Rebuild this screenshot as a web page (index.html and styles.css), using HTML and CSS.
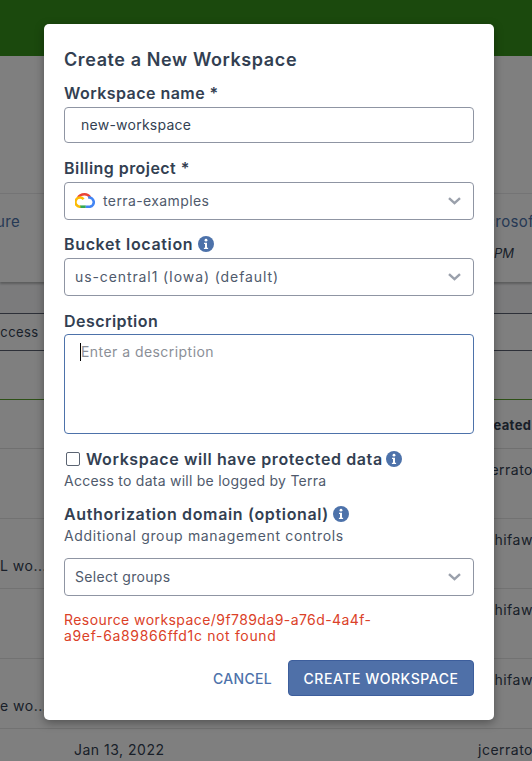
FILE: index.html
```html
<!DOCTYPE html>
<html lang="en">
<head>
<meta charset="utf-8">
<title>Create a New Workspace</title>
<link rel="stylesheet" href="styles.css">
</head>
<body>
<div class="page">
  <header class="topbar"></header>
  <section class="intro"></section>
  <section class="cards">
    <span class="card-link">ure</span>
    <span class="card-link">Microsoft</span>
  </section>
  <section class="card-meta"><span></span><span class="meta-time">PM</span></section>
  <section class="tabs"></section>
  <section class="filter"><span>Access</span></section>
  <section class="gap"></section>
  <section class="thead"><span></span><span class="head-cell">Created</span></section>
  <div class="row"><span class="name"></span><span class="date"></span><span class="owner">jcerrato</span></div>
  <div class="row"><span class="name">L wo...</span><span class="date"></span><span class="owner">schifaw</span></div>
  <div class="row"><span class="name"></span><span class="date"></span><span class="owner">schifaw</span></div>
  <div class="row"><span class="name">e wo...</span><span class="date"></span><span class="owner">schifaw</span></div>
  <div class="row"><span class="name"></span><span class="date top">Jan 13, 2022</span><span class="owner">jcerrato</span></div>
</div>
<div class="overlay"></div>
<form class="modal">
  <h1 class="title">Create a New Workspace</h1>
  <label class="label l-name" for="wsname">Workspace name *</label>
  <input id="wsname" class="input" type="text" value="new-workspace">
  <div class="label l-billing">Billing project *</div>
  <div class="select">
    <svg class="gcp" viewBox="0 0 20 15" aria-hidden="true">
      <path class="s-red" d="M2.9 5.2C3.9 3 6.5 1.3 9.6 1.3c2.2 0 4.2 1 5.4 2.9"/>
      <path class="s-blue" d="M13.2 4.6A4.6 4.6 0 0 1 15 13.7H10.4"/>
      <path class="s-green" d="M10.6 13.7H5"/>
      <path class="s-yellow" d="M5.4 13.7A4.6 4.6 0 1 1 8.6 6.2"/>
    </svg>
    <span class="value v-terra">terra-examples</span>
    <svg class="chev" viewBox="0 0 13 8" aria-hidden="true"><path d="M1 1.2 6.5 6.2 12 1.2"/></svg>
  </div>
  <div class="label l-bucket">Bucket location
    <svg class="info" viewBox="0 0 16 16" aria-hidden="true"><circle cx="8" cy="8" r="8"/><circle class="i" cx="8" cy="4.2" r="1.4"/><path class="i" d="M6 6.7h3v5h1.1v1.4H5.9v-1.4H7V8.1H6z"/></svg>
  </div>
  <div class="select">
    <span class="value v-bucket">us-central1 (Iowa) (default)</span>
    <svg class="chev" viewBox="0 0 13 8" aria-hidden="true"><path d="M1 1.2 6.5 6.2 12 1.2"/></svg>
  </div>
  <label class="label l-desc" for="desc">Description</label>
  <div class="area-wrap">
    <textarea id="desc" class="area" placeholder="Enter a description"></textarea>
    <span class="caret"></span>
  </div>
  <div class="check-row">
    <input class="check" type="checkbox" aria-label="Workspace will have protected data">
    <span class="check-label">Workspace will have protected data</span>
    <svg class="info" viewBox="0 0 16 16" aria-hidden="true"><circle cx="8" cy="8" r="8"/><circle class="i" cx="8" cy="4.2" r="1.4"/><path class="i" d="M6 6.7h3v5h1.1v1.4H5.9v-1.4H7V8.1H6z"/></svg>
  </div>
  <p class="hint h-access">Access to data will be logged by Terra</p>
  <div class="label l-auth">Authorization domain (optional)
    <svg class="info" viewBox="0 0 16 16" aria-hidden="true"><circle cx="8" cy="8" r="8"/><circle class="i" cx="8" cy="4.2" r="1.4"/><path class="i" d="M6 6.7h3v5h1.1v1.4H5.9v-1.4H7V8.1H6z"/></svg>
  </div>
  <p class="hint h-auth">Additional group management controls</p>
  <div class="select s-groups">
    <span class="value v-groups">Select groups</span>
    <svg class="chev" viewBox="0 0 13 8" aria-hidden="true"><path d="M1 1.2 6.5 6.2 12 1.2"/></svg>
  </div>
  <p class="error">Resource workspace/9f789da9-a76d-4a4f-<br><span class="err2">a9ef-6a89866ffd1c not found</span></p>
  <div class="actions">
    <button class="btn-text" type="button">CANCEL</button>
    <button class="btn-primary" type="button">CREATE WORKSPACE</button>
  </div>
</form>
</body>
</html>
```
FILE: styles.css
```css
* { box-sizing: border-box; }
html, body { margin: 0; padding: 0; }
body {
  width: 532px; height: 761px; overflow: hidden; position: relative;
  background: #fff; color: #333f52;
  font-family: Inter, "Noto Sans", "Liberation Sans", sans-serif;
  font-size: 14px;
}
.page { width: 532px; height: 761px; overflow: hidden; }
.topbar { height: 56px; background: #36921a; }
.intro { height: 138px; background: #fff; border-bottom: 1px solid #e8e8ea; }
.cards { height: 50px; display: flex; justify-content: space-between; align-items: center; background: #fff; font-size: 15px; letter-spacing: .4px; color: #4d72aa; padding-top: 5px; }
.card-link:first-child { margin-left: -4px; }
.card-link:last-child { margin-right: -7px; }
.card-meta { height: 38px; display: flex; justify-content: flex-end; background: #fff; box-shadow: 0 2px 2px rgba(0,0,0,.25); font-style: italic; font-size: 13px; position: relative; }
.meta-time { width: 38px; padding-top: 1px; }
.tabs { height: 32px; background: #f6f7f9; border-bottom: 1px solid #5a6070; }
.filter { height: 37px; background: #fff; border-bottom: 1px solid #5a6070; display: flex; align-items: center; font-size: 13px; letter-spacing: .4px; }
.filter span { margin-left: -9px; }
.gap { height: 49px; background: #fff; border-bottom: 1px solid #5aa02c; }
.thead { height: 49px; border-bottom: 1px solid #e0e0e0; display: flex; align-items: center; font-weight: 700; font-size: 13px; letter-spacing: .4px; }
.head-cell { margin-left: 478px; white-space: nowrap; padding-top: 1px; }
.row { height: 70px; border-bottom: 1px solid #e4e4e4; display: grid; grid-template-columns: 74px 404px 54px; font-size: 14px; letter-spacing: .5px; }
.name { padding-top: 38px; white-space: nowrap; text-align: right; padding-right: 34px; }
.date { padding-top: 12px; }
.owner { padding-top: 12px; white-space: nowrap; }
.overlay { position: absolute; inset: 0; background: rgba(0,0,0,.5); }

.modal {
  position: absolute; left: 44px; top: 24px; width: 450px; height: 696px;
  background: #fff; border-radius: 5px; padding: 24px 20px 0;
  box-shadow: 0 3px 10px rgba(0,0,0,.35);
}
.title { margin: 0; padding-top: 1px; height: 22px; font-size: 18px; line-height: 22px; font-weight: 600; letter-spacing: .6px; color: #333f52; }
.label { display: flex; align-items: center; gap: 5px; font-size: 16px; line-height: 20px; font-weight: 600; letter-spacing: .45px; color: #333f52; }
.l-name { margin-top: 13px; margin-bottom: 4px; }
.l-billing { margin-top: 15px; margin-bottom: 4px; }
.l-bucket { margin-top: 14px; margin-bottom: 4px; letter-spacing: .65px; }
.l-desc { margin-top: 15px; margin-bottom: 3px; }
.l-auth { margin-top: 13px; letter-spacing: .65px; gap: 4px; }
.input {
  display: block; width: 410px; height: 36px; padding: 0 16px 2px;
  border: 1px solid #8f95a3; border-radius: 4px; font: inherit; font-size: 14px; letter-spacing: .25px; color: #333f52; background: #fff; outline: none;
}
.select {
  display: flex; align-items: center; height: 38px; padding: 0 12px 2px 10px; gap: 8px;
  border: 1px solid #8f95a3; border-radius: 4px; font-size: 14px; color: #4f5a6c;
}
.value { flex: 1; }
.v-terra { letter-spacing: .4px; }
.v-bucket { letter-spacing: .9px; }
.v-groups { letter-spacing: .3px; }
.gcp { width: 20px; height: 15px; flex: none; fill: none; stroke-width: 2.6; }
.s-red { stroke: #ea4335; }
.s-blue { stroke: #4285f4; }
.s-green { stroke: #34a853; }
.s-yellow { stroke: #fbbc05; }
.chev { width: 13px; height: 8px; flex: none; fill: none; stroke: #9aa0ab; stroke-width: 2.4; margin-top: 2px; }
.info { width: 16px; height: 16px; flex: none; fill: #4d72aa; }
.info .i { fill: #fff; }
.area-wrap { position: relative; height: 100px; }
.area {
  display: block; width: 410px; height: 100px; padding: 7px 16px; resize: none;
  border: 1px solid #4d72aa; border-radius: 4px; font: inherit; font-size: 14px; line-height: 20px; letter-spacing: .45px; outline: none; color: #333f52;
}
.area::placeholder { color: #8b8f97; opacity: 1; }
.caret { position: absolute; left: 16px; top: 9px; width: 1px; height: 18px; background: #000; }
.check-row { display: flex; align-items: center; height: 20px; margin-top: 15px; }
.check {
  appearance: none; width: 14px; height: 14px; margin: 0 6px 0 2px; flex: none;
  border: 1px solid #5b6472; border-radius: 2px; background: #fff;
}
.check-label { font-size: 16px; line-height: 20px; font-weight: 600; letter-spacing: .6px; color: #333f52; margin-right: 3px; }
.hint { margin: 0; font-size: 14px; line-height: 20px; color: #4f5a6c; }
.h-access { margin-top: 2px; letter-spacing: .25px; }
.h-auth { margin-top: 2px; letter-spacing: .65px; }
.s-groups { margin-top: 12px; }
.error { margin: 16px 0 0; font-size: 14px; line-height: 16px; letter-spacing: .43px; color: #db4128; }
.err2 { letter-spacing: .65px; }
.actions { display: flex; justify-content: flex-end; align-items: center; margin-top: 16px; gap: 16px; }
.btn-text { border: 0; background: none; padding: 0; font: inherit; font-size: 14px; font-weight: 500; letter-spacing: .3px; color: #4d72aa; }
.btn-primary {
  width: 186px; height: 36px; border: 1px solid #3d5e9c; border-radius: 4px;
  background: #4f70a8; color: #fff; font: inherit; font-size: 14px; font-weight: 500; letter-spacing: .55px;
}
```
